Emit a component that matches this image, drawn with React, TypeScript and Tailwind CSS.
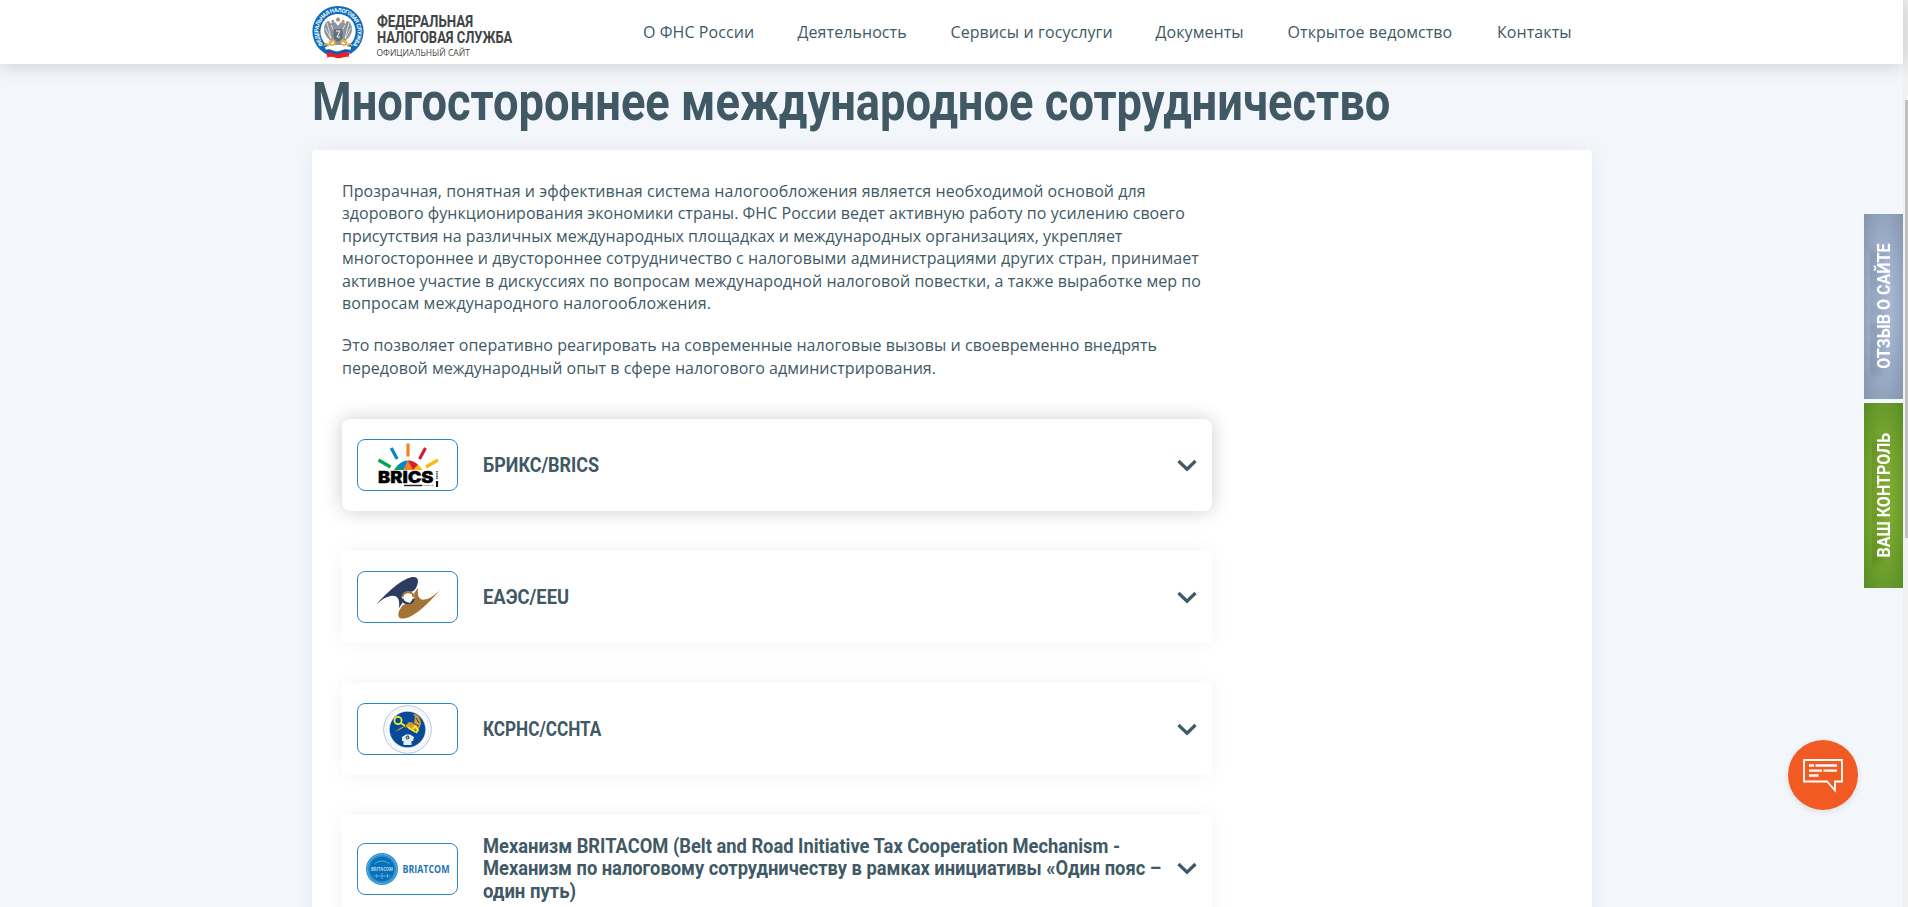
import React from "react";

const NAV = [
  { label: "О ФНС России", w: "w-[154.500px]" },
  { label: "Деятельность", w: "w-[153px]" },
  { label: "Сервисы и госуслуги", w: "w-[205px]" },
  { label: "Документы", w: "w-[132px]" },
  { label: "Открытое ведомство", w: "w-[209.500px]" },
  { label: "Контакты", w: "w-[78px]" },
];

const INTRO = [
  { text: "Прозрачная, понятная и эффективная система налогообложения является необходимой основой для", track: "tracking-[0.065px]" },
  { text: "здорового функционирования экономики страны. ФНС России ведет активную работу по усилению своего", track: "tracking-[0.037px]" },
  { text: "присутствия на различных международных площадках и международных организациях, укрепляет", track: "tracking-[-0.010px]" },
  { text: "многостороннее и двустороннее сотрудничество с налоговыми администрациями других стран, принимает", track: "tracking-[0.070px]" },
  { text: "активное участие в дискуссиях по вопросам международной налоговой повестки, а также выработке мер по", track: "tracking-[0.055px]" },
  { text: "вопросам международного налогообложения.", track: "tracking-[0.110px]" },
];

const OUTRO = [
  { text: "Это позволяет оперативно реагировать на современные налоговые вызовы и своевременно внедрять", track: "tracking-[0.040px]" },
  { text: "передовой международный опыт в сфере налогового администрирования.", track: "tracking-[0.035px]" },
];

function Emblem() {
  return (
    <svg className="h-[54px] w-[54px] shrink-0" viewBox="0 0 54 54">
      <defs>
        <path id="ring" d="M13.100 40.400A19.600 19.600 0 1 1 40.900 40.400" />
      </defs>
      <circle cx="27" cy="26.500" r="25.600" fill="#0b6bbd" />
      <circle cx="27" cy="26.500" r="17.600" fill="#fff" />
      <text fontSize="5.600" fontWeight="700" fill="#fff" fontFamily="Roboto, sans-serif">
        <textPath href="#ring" textLength="90" startOffset="1">ФЕДЕРАЛЬНАЯ НАЛОГОВАЯ СЛУЖБА</textPath>
      </text>
      <g fill="#8d949c">
        <path d="M25 18c-2-2-5-1-5 1l-2-3c-3 0-5 4-5 8 0 5 3 9 7 12l7-3 7 3c4-3 7-7 7-12 0-4-2-8-5-8l-2 3c0-2-3-3-5-1l-2 3z" />
        <path d="M22 34h10l-2 6h-6z" />
      </g>
      <g stroke="#fff" strokeWidth=".7" fill="none">
        <path d="M16 18l4 15M14 23l6 11M38 18l-4 15M40 23l-6 11M20 20l3 6M34 20l-3 6" />
      </g>
      <path d="M22.500 24h9v8c0 3-3 4-4.500 5-1.500-1-4.500-2-4.500-5z" fill="#62707e" />
      <path d="M25 26h4l-3 6h3" stroke="#fff" fill="none" />
      <path d="M25 14.500l1-2h2l1 2-.5 2h-3zM20 17l1-2h2v2zM31 17v-2h2l1 2z" fill="#a59474" />
      <path d="M16 41l7-6M21 34c3 1 4 5 1 6s-5-3-2-5M31 35l7 6M33 34c-3 1-4 5-1 6s5-3 2-5M13 41c1-3 4-3 4 0M37 41c0-3 3-3 4 0" stroke="#dfa83c" strokeWidth="1.500" fill="none" />
      <path d="M14 42c5-3 9 3 14 1s8-2 12-1l-2 9c-4-2-8 2-12 1s-7-2-9 0z" fill="#fff" />
      <path d="M14.500 45c5-3 9 3 14 1s7-2 11-1l-1 3c-4-1-7 1-11 2s-8-3-12-1z" fill="#1459a8" />
      <path d="M15.500 48c5-2 8 3 13 1s6-2 10-1l-1 4c-4-1-8 2-12 1s-6-2-9 0z" fill="#ed1c24" />
    </svg>
  );
}

function BricsLogo() {
  return (
    <svg className="h-[46px] w-[62px]" viewBox="0 0 62 46">
      <g strokeWidth="3.200" fill="none">
        <path d="M31 1.500v13" stroke="#f58220" />
        <path d="M14.200 6l6 11" stroke="#0089c8" />
        <path d="M48.500 6l-6 11" stroke="#d2202f" />
        <path d="M1.500 18l12 7" stroke="#00a54f" />
        <path d="M61 18l-12 7" stroke="#fdb913" />
      </g>
      <path d="M20 24c3-3.500 7-5.500 11-5.500l-4 9.500h-9z" fill="#0089c8" />
      <path d="M17 28l3.500-4.500 5 4.500z" fill="#00a54f" />
      <path d="M31 18.500c5 0 9 2.500 11 5.500l-4 4h-9z" fill="#d2202f" />
      <path d="M31 18.500l5 9.500H26z" fill="#f58220" />
      <path d="M41 22.500l5 5.500H36z" fill="#fdb913" />
      <text x="1" y="41" textLength="55.500" lengthAdjust="spacingAndGlyphs" fontSize="16" fontWeight="900" fill="#000" stroke="#000" strokeWidth=".3" fontFamily="Inter, sans-serif">BRICS</text>
      <path d="M60 29v8" stroke="#444" strokeWidth="1.600" strokeDasharray="1.500 .7" />
      <path d="M60 39v6" stroke="#111" strokeWidth="2.200" />
      <path d="M27 43.500h18" stroke="#222" strokeWidth="1.400" />
      <path d="M45 43.500h12" stroke="#999" strokeWidth="1.200" strokeDasharray="1.500 .5" />
    </svg>
  );
}

function EeuLogo() {
  return (
    <svg className="h-[44px] w-[66px]" viewBox="0 0 66 44">
      <path d="M1 30C12 17 28 3 38 2c6-.5 6 5 3 11-2 3-4 4-7 4-5 0-7 4-6 10l-4 6c1-8-1-13-8-12C10 22 6 25 1 30z" fill="#2c3b60" />
      <path d="M65 15C54 28 40 42 29 43.500c-7 1-7-5-3-11 2-3 4-4 7-4 5 0 7-4 6-10l4-6c-1 8 1 13 7 12 6-1 10-5 15-9.500z" fill="#a37433" />
      <circle cx="33" cy="22.800" r="6.200" fill="#fff" />
      <path d="M27.300 23.500a5.800 5.800 0 0 0 11.400 0" fill="none" stroke="#2c3b60" strokeWidth="2.200" />
      <path d="M27.300 22a5.800 5.800 0 0 1 11.400 0" fill="none" stroke="#a37433" strokeWidth="2.200" />
      <path d="M29 20l3 2 1-2 4-1v3l1 1-3 5-3-1-2-3z" fill="#fff" />
    </svg>
  );
}

function CcntaLogo() {
  return (
    <svg className="h-[49px] w-[49px]" viewBox="0 0 49 49">
      <g fill="none" stroke="#9db4d6">
        <circle cx="24.500" cy="24.500" r="23.800" strokeWidth=".8" />
        <circle cx="24.500" cy="24.500" r="21.500" strokeWidth="1.200" strokeDasharray="1 1.400" stroke="#cdd7ea" />
      </g>
      <circle cx="24.500" cy="24.500" r="18.600" fill="#cfd8ea" />
      <circle cx="24.500" cy="24.500" r="17.800" fill="#064a9b" />
      <path d="M12 27l5-4 5-2 4-4 5 1 1-6-2-3c5 0 8 5 8 10l-3 7-6-2-6-3-5 3z" fill="#dc9a2c" />
      <circle cx="15" cy="15.500" r="3.600" fill="none" stroke="#f4ee24" strokeWidth="1.800" />
      <path d="M17.500 18l15 9M29 25l3-4 3 4-2 3" stroke="#f4ee24" strokeWidth="1.800" fill="none" />
      <path d="M30 18l6 3M33 13l3 5M22 20l3 4" stroke="#064a9b" strokeWidth="1" />
      <path d="M19 32l4-2.500h4l4 2.500-1 4h-1.500v4h-8v-4H19z" fill="#e8edf6" />
      <circle cx="24.500" cy="32.500" r="1.900" fill="#064a9b" />
      <circle cx="24.500" cy="32.500" r=".9" fill="#f4ee24" />
    </svg>
  );
}

function BritacomLogo() {
  return (
    <svg className="h-[34px] w-[87px] overflow-visible" viewBox="0 0 87 34">
      <circle cx="18" cy="17" r="16" fill="#2a8fcd" />
      <circle cx="18" cy="17" r="14.500" fill="none" stroke="#8cc6e8" strokeWidth="1" strokeDasharray="1.500 1" />
      <circle cx="18" cy="17" r="12.300" fill="#0870b9" />
      <path d="M9.500 24h17M12.500 22v4M18 21v6M23.500 22v4M10.500 12c4-4 11-4 15 0" stroke="#63b0df" strokeWidth=".9" fill="none" />
      <text x="7" y="19" textLength="22" lengthAdjust="spacingAndGlyphs" fontSize="5.500" fontWeight="700" fill="#b5dcf2" fontFamily="Open Sans, sans-serif">BRITACOM</text>
      <text x="38.500" y="21.300" textLength="47" lengthAdjust="spacingAndGlyphs" fontSize="9.800" fontWeight="700" fill="#1f74b5" fontFamily="Open Sans, sans-serif">BRIATCOM</text>
    </svg>
  );
}

function Chevron() {
  return (
    <svg className="h-[13px] w-[20px] shrink-0" viewBox="0 0 20 13">
      <path d="M1.500 2L10 10.200 18.500 2" fill="none" stroke="#405965" strokeWidth="3.200" />
    </svg>
  );
}

function Item({ logo, lines, active }: { logo: React.ReactNode; lines: { text: string; scale: string }[]; active?: boolean }) {
  return (
    <section
      className={
        active
          ? "flex min-h-[92px] items-center rounded-lg bg-white py-5 pr-[15px] pl-[15px] shadow-[0_0_20px_rgba(0,0,0,0.2)]"
          : "flex min-h-[92px] items-center bg-white py-5 pr-[15px] pl-[15px] shadow-[0_0_20px_rgba(0,0,0,0.05)]"
      }
    >
      <div className="flex h-[52px] w-[101px] shrink-0 items-center justify-center rounded-lg border border-[#2b86c8] bg-white">{logo}</div>
      <h2 className="ml-[25px] w-[680px] font-[Roboto,sans-serif] text-[21px] leading-[22.4px] font-bold text-[#405965]">
        {lines.map((l) => (
          <span key={l.text} className="block whitespace-nowrap">
            <span className={"inline-block origin-left " + l.scale}>{l.text}</span>
          </span>
        ))}
      </h2>
      <div className="flex flex-1 justify-end">
        <Chevron />
      </div>
    </section>
  );
}

export default function App() {
  return (
    <div className="flex h-[907px] w-full overflow-hidden bg-[#f3f7fc] text-[#405965]">
      <div className="flex min-w-0 flex-1 flex-col">
        <header className="relative z-10 flex h-16 shrink-0 bg-white pl-[311px] shadow-[0_0_20px_rgba(0,0,0,0.2)]">
          <div className="flex w-[332px] pt-[5px]">
            <Emblem />
            <div className="ml-[11.500px] pt-[7.500px] font-[Roboto,sans-serif] whitespace-nowrap text-[#3f4444]">
              <div className="origin-left scale-x-[0.780] text-[17px] leading-[16.500px] font-bold">ФЕДЕРАЛЬНАЯ</div>
              <div className="origin-left scale-x-[0.762] text-[17px] leading-[16.500px] font-bold">НАЛОГОВАЯ СЛУЖБА</div>
              <div className="font-['Open_Sans',sans-serif] text-[8.500px] leading-[14px]">ОФИЦИАЛЬНЫЙ САЙТ</div>
            </div>
          </div>
          <nav className="flex items-center font-['Open_Sans',sans-serif] text-base tracking-[0.080px] whitespace-nowrap">
            {NAV.map((n) => (
              <a key={n.label} className={"block shrink-0 " + n.w}>{n.label}</a>
            ))}
          </nav>
        </header>
        <main className="flex min-h-0 flex-1 flex-col pl-[312px]">
          <h1 className="h-[86px] shrink-0 pt-[6px] font-[Roboto,sans-serif] text-[54px] leading-[64px] font-bold whitespace-nowrap">
            <span className="inline-block origin-left scale-x-[0.839]">Многостороннее международное сотрудничество</span>
          </h1>
          <div className="h-[900px] w-[1280px] shrink-0 rounded-sm bg-white pt-[30px] pl-[30px] shadow-[0_0_20px_rgba(0,0,0,0.06)]">
            <div className="font-['Open_Sans',sans-serif] text-base leading-[22.400px] whitespace-nowrap">
              <p className="mb-5">
                {INTRO.map((l) => (
                  <span key={l.text} className={"block " + l.track}>{l.text}</span>
                ))}
              </p>
              <p>
                {OUTRO.map((l) => (
                  <span key={l.text} className={"block " + l.track}>{l.text}</span>
                ))}
              </p>
            </div>
            <div className="mt-[39.800px] flex w-[870px] flex-col gap-10">
              <Item active logo={<BricsLogo />} lines={[{ text: "БРИКС/BRICS", scale: "scale-x-[0.855]" }]} />
              <Item logo={<EeuLogo />} lines={[{ text: "ЕАЭС/EEU", scale: "scale-x-[0.873]" }]} />
              <Item logo={<CcntaLogo />} lines={[{ text: "КСРНС/CCHTA", scale: "scale-x-[0.816]" }]} />
              <Item
                logo={<BritacomLogo />}
                lines={[
                  { text: "Механизм BRITACOM (Belt and Road Initiative Tax Cooperation Mechanism -", scale: "scale-x-[0.872]" },
                  { text: "Механизм по налоговому сотрудничеству в рамках инициативы «Один пояс –", scale: "scale-x-[0.871]" },
                  { text: "один путь)", scale: "scale-x-[0.882]" },
                ]}
              />
            </div>
          </div>
        </main>
      </div>
      <aside className="w-[5px] shrink-0 bg-[#f1f1f1] pt-[100px] pl-[2px]">
        <div className="h-[438px] bg-[#c1c1c1]" />
      </aside>

      <div className="fixed top-[214px] right-[5px] z-20 flex w-[39px] flex-col gap-1">
        <div className="flex h-[185px] items-center justify-center bg-[radial-gradient(ellipse_at_center,#a4b6d0_30%,#8394ae_100%)]">
          <span className="rotate-180 scale-y-[0.846] font-[Roboto,sans-serif] text-[19px] leading-none font-bold whitespace-nowrap text-white [writing-mode:vertical-rl] [text-shadow:-8px_-8px_7px_rgba(50,70,80,0.300)]">ОТЗЫВ О САЙТЕ</span>
        </div>
        <div className="flex h-[185px] items-center justify-center bg-[radial-gradient(ellipse_at_center,#7dab31_30%,#578d25_100%)]">
          <span className="rotate-180 scale-y-[0.843] font-[Roboto,sans-serif] text-[19px] leading-none font-bold whitespace-nowrap text-white [writing-mode:vertical-rl] [text-shadow:-8px_-8px_7px_rgba(50,80,20,0.300)]">ВАШ КОНТРОЛЬ</span>
        </div>
      </div>

      <button className="fixed top-[740px] left-[1788px] z-20 flex h-[70px] w-[70px] items-center justify-center rounded-full bg-[#f15a22] shadow-[0_2px_6px_rgba(0,0,0,0.100)]">
        <svg className="h-[70px] w-[70px]" viewBox="0 0 70 70" fill="none" stroke="#fff">
          <path d="M16 20h38v21.500h-7v9L39 41.500H16z" strokeWidth="1.800" />
          <path d="M21 25.500h5M27.500 25.500H49M21 30.600h13M35.500 30.600H49M21 35.500h9.500" strokeWidth="2.400" />
        </svg>
      </button>
    </div>
  );
}
